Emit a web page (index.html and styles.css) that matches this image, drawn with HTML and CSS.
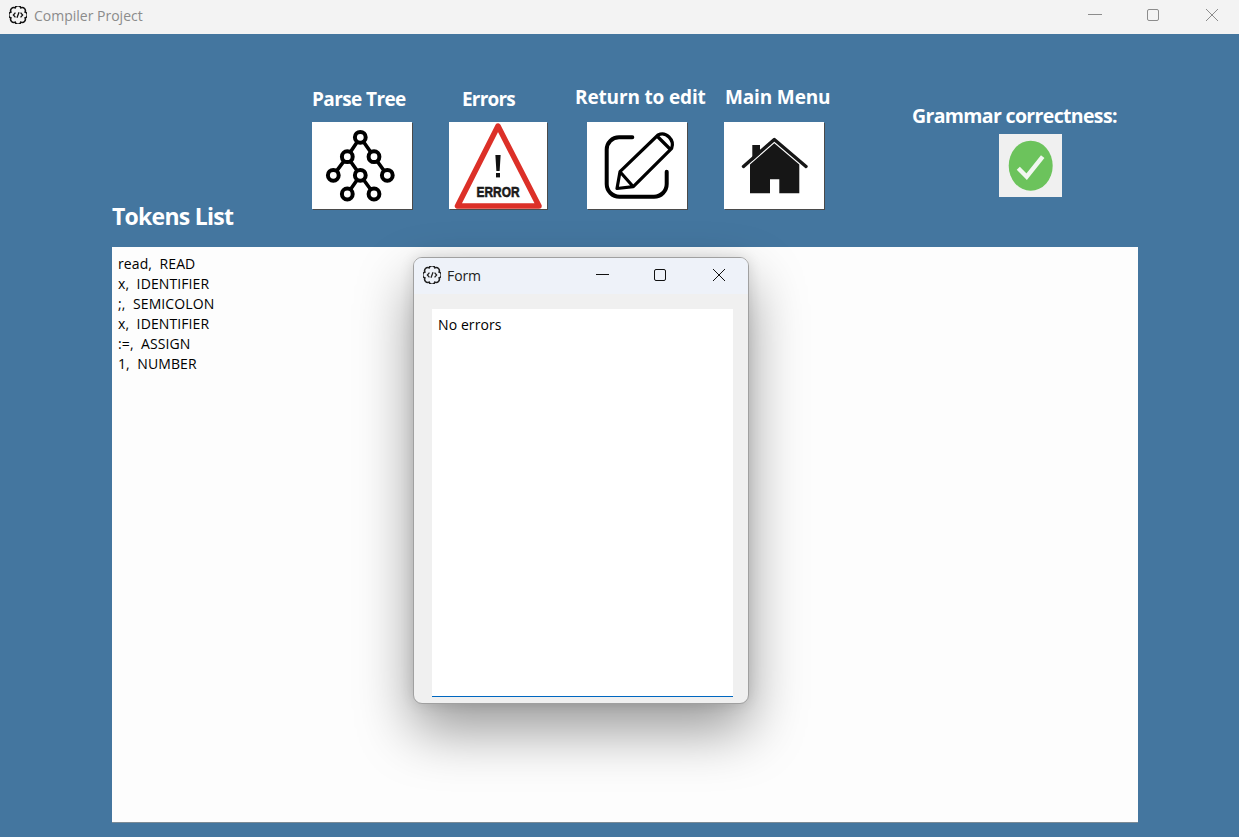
FILE: index.html
```html
<!DOCTYPE html>
<html lang="en">
<head>
<meta charset="utf-8">
<title>Compiler Project</title>
<link rel="stylesheet" href="styles.css">
</head>
<body>
<svg class="defs" width="0" height="0" aria-hidden="true">
  <symbol id="app-gear" viewBox="1 1 14 14">
    <path d="M13.5 5.7A2.4 2.4 0 0 1 13.5 10.3A2.4 2.4 0 0 1 10.3 13.5A2.4 2.4 0 0 1 5.7 13.5A2.4 2.4 0 0 1 2.5 10.3A2.4 2.4 0 0 1 2.5 5.7A2.4 2.4 0 0 1 5.7 2.5A2.4 2.4 0 0 1 10.3 2.5A2.4 2.4 0 0 1 13.5 5.7Z" fill="none" stroke="currentColor" stroke-width="1.2"/>
    <path d="M6 6.2L4.4 8L6 9.8M10 6.2L11.6 8L10 9.8M8.8 5.8L7.2 10.2" fill="none" stroke="currentColor" stroke-width="1"/>
  </symbol>
</svg>

<header class="titlebar">
  <svg class="app-icon"><use href="#app-gear"/></svg>
  <span class="title-text">Compiler Project</span>
  <div class="win-controls">
    <span class="win-btn"><svg width="14" height="14" viewBox="0 0 14 14"><path d="M0 6.5H14" stroke="#8c8c8c"/></svg></span>
    <span class="win-btn"><svg width="14" height="14" viewBox="0 0 14 14"><rect x="1.5" y="1.5" width="11" height="11" rx="1.5" fill="none" stroke="#8c8c8c"/></svg></span>
    <span class="win-btn"><svg width="14" height="14" viewBox="0 0 14 14"><path d="M1 1L13 13M13 1L1 13" stroke="#8c8c8c"/></svg></span>
  </div>
</header>

<main class="main">
  <div class="top-row">
    <h1 class="tokens-title">Tokens List</h1>
    <div class="tools">
      <div class="tool tool-tree">
        <div class="tool-label">Parse Tree</div>
        <button class="tool-btn" type="button">
          <svg width="100" height="87" viewBox="0 0 100 87">
            <path d="M48.3 15.3L35.3 34.7L21.3 53.3M35.3 34.7L48.3 53.3L35.3 72M48.3 53.3L62 72M48.3 15.3L62 34.7L75.3 53.3" fill="none" stroke="#000" stroke-width="3.6"/>
            <g fill="#fff" stroke="#000" stroke-width="4">
              <circle cx="48.3" cy="15.3" r="5.4"/><circle cx="35.3" cy="34.7" r="5.4"/><circle cx="62" cy="34.7" r="5.4"/>
              <circle cx="21.3" cy="53.3" r="5.4"/><circle cx="48.3" cy="53.3" r="5.4"/><circle cx="75.3" cy="53.3" r="5.4"/>
              <circle cx="35.3" cy="72" r="5.4"/><circle cx="62" cy="72" r="5.4"/>
            </g>
          </svg>
        </button>
      </div>
      <div class="tool tool-errors">
        <div class="tool-label">Errors</div>
        <button class="tool-btn tool-btn-narrow" type="button">
          <svg width="98" height="87" viewBox="0 0 98 87">
            <path d="M49 4L8.5 84H90Z" fill="#fff" stroke="#dc3028" stroke-width="5.5" stroke-linejoin="round"/>
            <path d="M46.4 33H51.6L50.6 49H47.4Z" fill="#111"/>
            <rect x="47" y="51" width="4" height="4.4" fill="#111"/>
            <text class="error-word" x="49" y="75" text-anchor="middle" textLength="43" lengthAdjust="spacingAndGlyphs">ERROR</text>
          </svg>
        </button>
      </div>
      <div class="tool tool-return">
        <div class="tool-label tool-label-high">Return to edit</div>
        <button class="tool-btn" type="button">
          <svg width="100" height="87" viewBox="0 0 100 87">
            <path d="M45.3 15.3H32A12.3 12.3 0 0 0 19.7 27.6V62A12.7 12.7 0 0 0 32.4 74.7H67A12.7 12.7 0 0 0 79.7 62V49.7" fill="none" stroke="#000" stroke-width="4" stroke-linecap="round"/>
            <path d="M33 49.7L71 13Q77 10 82 15Q87 20 84.7 26.3L46.3 64.7L30 66.5ZM33 49.7L46.3 64.7M70.5 14.5L83.5 27.5" fill="none" stroke="#000" stroke-width="3.2" stroke-linejoin="round"/>
          </svg>
        </button>
      </div>
      <div class="tool tool-menu">
        <div class="tool-label tool-label-high">Main Menu</div>
        <button class="tool-btn" type="button">
          <svg width="100" height="87" viewBox="0 0 100 87">
            <path d="M28.3 23H36V32L28.3 39Z" fill="#161616"/>
            <path d="M50.3 21.3L75.3 42.5V71.3H55.3V57.3H46V71.3H26V42.5Z" fill="#161616"/>
            <path d="M19.5 44.5L50.3 17.5L82 44.5" fill="none" stroke="#161616" stroke-width="3.4" stroke-linecap="round" stroke-linejoin="round"/>
          </svg>
        </button>
      </div>
    </div>
    <div class="grammar">
      <div class="grammar-label">Grammar correctness:</div>
      <div class="grammar-box">
        <svg width="63" height="63" viewBox="0 0 63 63">
          <ellipse cx="31.7" cy="31.7" rx="22" ry="25" fill="#6cc35c"/>
          <path d="M19.3 34.3L27.7 42.7L43.7 22.7" fill="none" stroke="#f2f7f0" stroke-width="4.4"/>
        </svg>
      </div>
    </div>
  </div>

  <div class="token-box">
    <div class="token-line">read,  READ</div>
    <div class="token-line">x,  IDENTIFIER</div>
    <div class="token-line">;,  SEMICOLON</div>
    <div class="token-line">x,  IDENTIFIER</div>
    <div class="token-line">:=,  ASSIGN</div>
    <div class="token-line">1,  NUMBER</div>
  </div>
</main>

<section class="modal">
  <header class="modal-bar">
    <svg class="modal-icon"><use href="#app-gear"/></svg>
    <span class="modal-title">Form</span>
    <div class="modal-controls">
      <span class="modal-btn"><svg width="14" height="14" viewBox="0 0 14 14"><path d="M1 6.5H14" stroke="#111"/></svg></span>
      <span class="modal-btn"><svg width="14" height="14" viewBox="0 0 14 14"><rect x="1.5" y="1.5" width="11" height="11" rx="1.5" fill="none" stroke="#111"/></svg></span>
      <span class="modal-btn"><svg width="14" height="14" viewBox="0 0 14 14"><path d="M1 1L13 13M13 1L1 13" stroke="#111"/></svg></span>
    </div>
  </header>
  <div class="modal-body">
    <div class="modal-text">No errors</div>
  </div>
</section>
</body>
</html>
```

FILE: styles.css
```css
* { box-sizing: border-box; }

html, body { height: 100%; }

body {
  margin: 0;
  display: flex;
  flex-direction: column;
  height: 837px;
  overflow: hidden;
  position: relative;
  background: #44769f;
  font-family: "Open Sans", "Noto Sans", sans-serif;
  color: #000;
}

.defs { position: absolute; }

.titlebar {
  height: 34px;
  flex: none;
  display: flex;
  align-items: center;
  padding-left: 9px;
  background: #f3f3f3;
}

.app-icon { width: 18px; height: 18px; color: #111; margin-top: -4px; }

.title-text {
  margin-left: 7px;
  margin-top: -4px;
  font-size: 14px;
  color: #8b8b8b;
}

.win-controls { margin-left: auto; margin-right: -2px; margin-top: -4px; display: flex; }

.win-btn {
  width: 58.5px;
  height: 30px;
  display: flex;
  align-items: center;
  justify-content: center;
}

.main {
  flex: 1;
  min-height: 0;
  display: flex;
  flex-direction: column;
  padding: 0 101px 14px 112px;
}

.top-row {
  height: 213px;
  flex: none;
  display: flex;
  position: relative;
}

.tokens-title {
  width: 200px;
  flex: none;
  margin: 169px 0 0;
  font-size: 23px;
  line-height: 26px;
  font-weight: 700;
  letter-spacing: -0.75px;
  color: #fff;
}

.tools { display: flex; gap: 37px; padding-top: 88px; }

.tool { position: relative; width: 100px; }
.tool-errors { width: 98px; margin-right: 3px; }

.tool-label {
  position: absolute;
  top: -36px;
  height: 26px;
  line-height: 26px;
  white-space: nowrap;
  font-size: 19px;
  font-weight: 700;
  letter-spacing: -0.6px;
  color: #fff;
}

.tool-label-high { top: -38px; letter-spacing: -0.15px; }

.tool-errors .tool-label { left: 13px; letter-spacing: -0.8px; }
.tool-return .tool-label { left: -12px; }
.tool-menu .tool-label { left: 1px; }

.tool-btn {
  display: block;
  width: 100px;
  height: 87px;
  padding: 0;
  border: 0;
  background: #fff;
  box-shadow: 1px 1px 0 #4a4a4a;
}

.tool-btn-narrow { width: 98px; }
.tool-btn svg { display: block; }

.error-word {
  font-family: "Liberation Sans", sans-serif;
  font-weight: 700;
  font-size: 15px;
  fill: #1a1a1a;
  stroke: #1a1a1a;
  stroke-width: 0.6;
}

.grammar { position: relative; margin-left: 175px; padding-top: 100px; }

.grammar-label {
  position: absolute;
  top: 69px;
  left: -87px;
  height: 26px;
  line-height: 26px;
  white-space: nowrap;
  font-size: 19.5px;
  font-weight: 700;
  letter-spacing: -0.65px;
  color: #fff;
}

.grammar-box { width: 63px; height: 63px; background: #f0f0f0; }
.grammar-box svg { display: block; }

.token-box {
  flex: 1;
  padding: 7px 6px;
  background: #fdfdfd;
  border-bottom: 1px solid #7c8b96;
  font-size: 14px;
  line-height: 20px;
  letter-spacing: 0.1px;
}

.token-line { white-space: pre; }

.modal {
  position: absolute;
  left: 413px;
  top: 257px;
  width: 336px;
  height: 447px;
  display: flex;
  flex-direction: column;
  border: 1px solid #a0a0a0;
  border-radius: 9px;
  overflow: hidden;
  background: #f0f0f0;
  box-shadow: 0 26px 56px rgba(0, 0, 0, 0.4), 0 0 14px rgba(0, 0, 0, 0.12);
}

.modal-bar {
  height: 36px;
  flex: none;
  display: flex;
  align-items: center;
  padding-left: 9px;
  background: #eef2f9;
}

.modal-icon { width: 18px; height: 18px; color: #222; margin-top: -2px; }

.modal-title { margin-left: 6px; margin-top: -2px; font-size: 14px; letter-spacing: -0.1px; color: #222; }

.modal-controls { margin-left: auto; margin-top: -2px; display: flex; }

.modal-btn {
  width: 58.5px;
  height: 30px;
  display: flex;
  align-items: center;
  justify-content: center;
}

.modal-body { flex: 1; padding: 15px 15px 6px 18px; }

.modal-text {
  height: 100%;
  padding: 6px;
  background: #fff;
  border-bottom: 1px solid #0067c0;
  font-size: 14px;
  line-height: 20px;
  letter-spacing: 0.1px;
}
```
